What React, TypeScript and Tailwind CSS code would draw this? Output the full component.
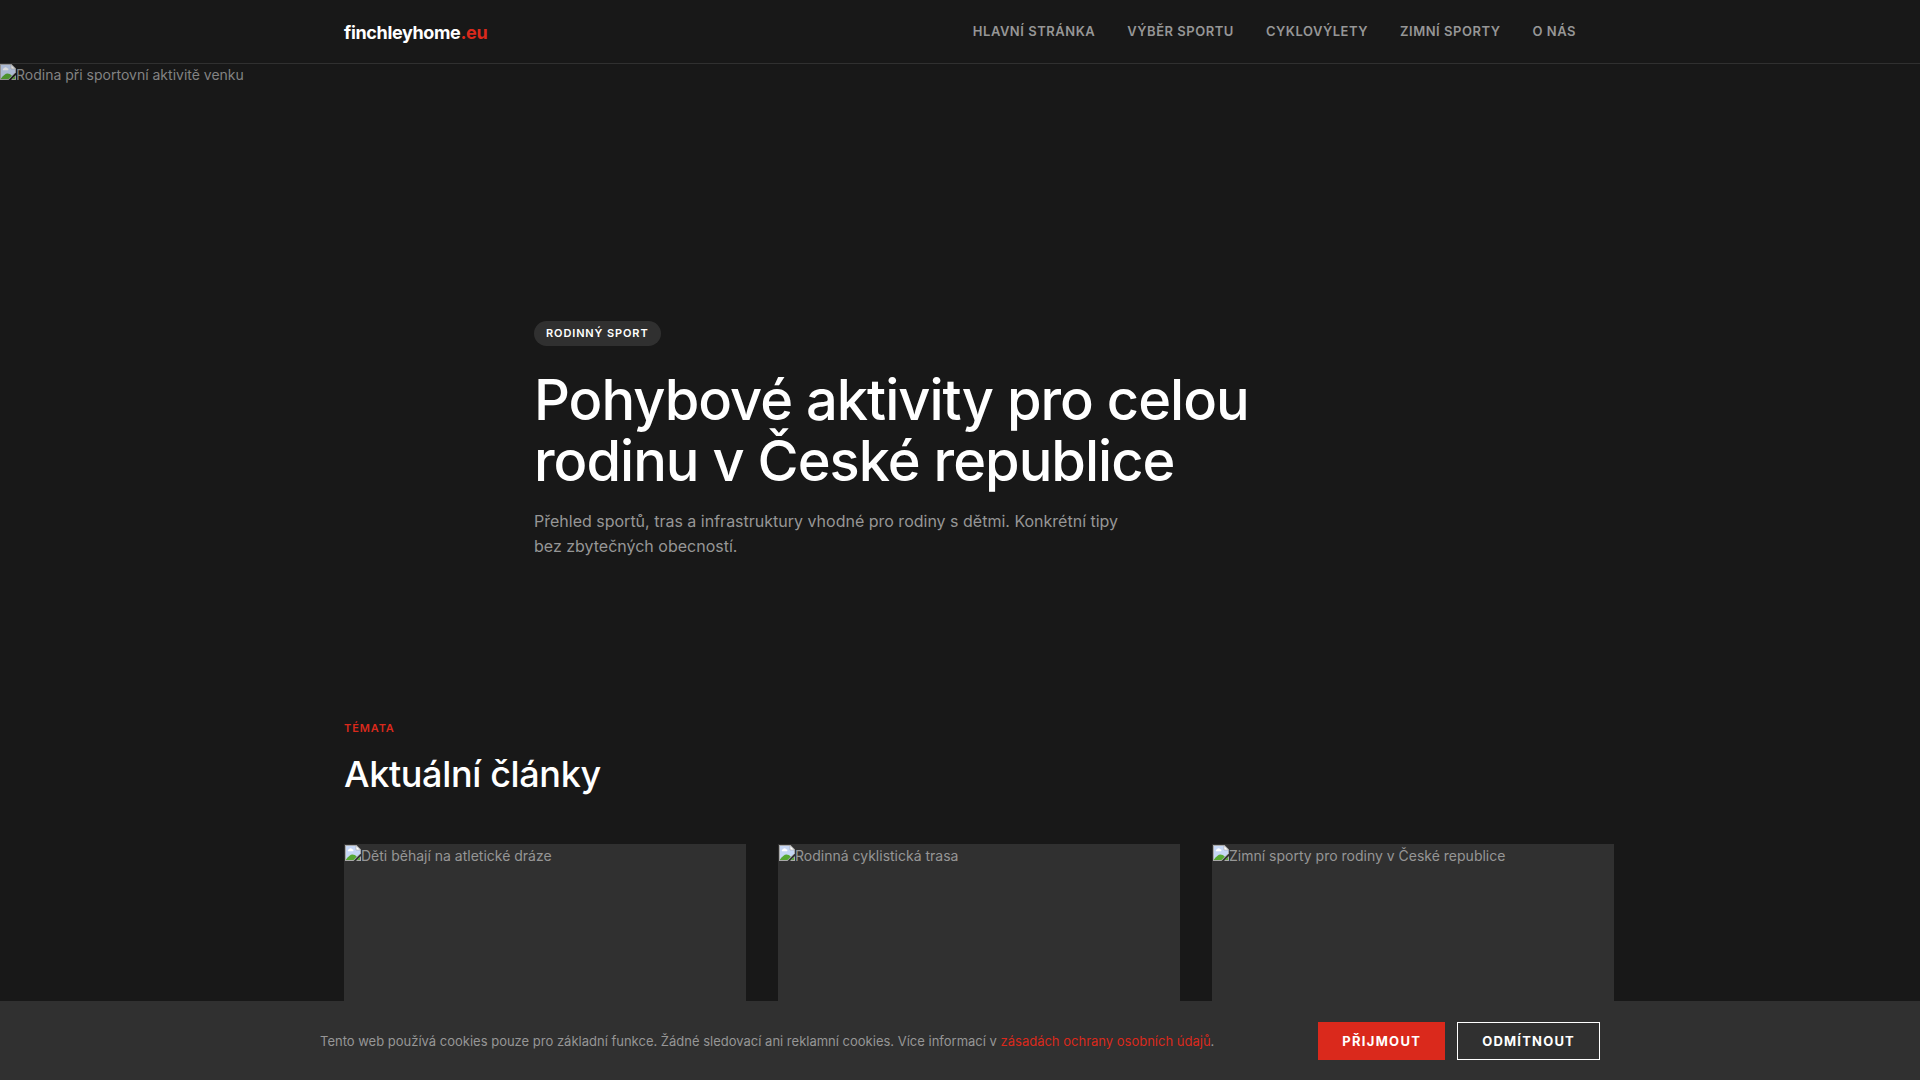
import React from "react";

const navItems = ["Hlavní stránka", "Výběr sportu", "Cyklovýlety", "Zimní sporty", "O nás"];

const articles = [
  "Děti běhají na atletické dráze",
  "Rodinná cyklistická trasa",
  "Zimní sporty pro rodiny v České republice",
];

function MissingImageIcon() {
  return (
    <svg width="16" height="16" viewBox="0 0 16 16" className="block shrink-0" aria-hidden="true">
      <path d="M0 0H11.5L16 4.5V8.5L8.5 16H0Z" fill="#a9a9a9" />
      <path d="M1 1H11L15 5V8.500L8.500 15H1Z" fill="#c6d7f5" />
      <path d="M3 6.2a1.3 1.3 0 0 1 1-2 1.8 1.800 0 0 1 3.200 0A1.100 1.100 0 0 1 8 6.200Z" fill="#fff" />
      <path d="M1 14.500C3 11.500 5.500 9.500 7.500 9.500C9 9.500 10.500 10.300 11.800 11.700L8.500 15H1Z" fill="#56a832" />
      <path d="M11 0.500V5H15.500Z" fill="#fff" stroke="#a9a9a9" strokeWidth="0.6" />
      <path d="M16 11V16H11Z" fill="#a9a9a9" />
      <path d="M15 12V15H12Z" fill="#56a832" />
    </svg>
  );
}

function MissingImage({ alt }: { alt: string }) {
  return (
    <div role="img" aria-label={alt} className="flex items-start text-sm leading-[22px]">
      <MissingImageIcon />
      <span>{alt}</span>
    </div>
  );
}

export default function App() {
  return (
    <div className="min-h-screen bg-[#181818] font-['Inter',sans-serif] text-[#969696]">
      <header className="border-b border-[#303030]">
        <div className="mx-auto flex h-[63px] max-w-[1280px] items-center justify-between px-6">
          <a href="#" className="pt-0.5 text-lg font-bold tracking-[-0.36px] text-white">
            finchleyhome<span className="text-[#da291c]">.eu</span>
          </a>
          <nav className="flex gap-8">
            {navItems.map((item) => (
              <a key={item} href="#" className="text-[13px] font-semibold uppercase tracking-[0.52px]">
                {item}
              </a>
            ))}
          </nav>
        </div>
      </header>

      <main>
        <section className="relative flex min-h-[591px] items-end">
          <div className="absolute inset-x-0 top-0 opacity-85">
            <MissingImage alt="Rodina při sportovní aktivitě venku" />
          </div>
          <div className="mx-auto w-full max-w-[900px] px-6 pb-24">
            <p className="w-fit rounded-full bg-[#303030] px-3 py-1 text-[11px] font-semibold uppercase leading-[17px] tracking-[0.88px] text-white">
              Rodinný sport
            </p>
            <h1 className="mt-6 text-[56px] font-medium leading-[61px] tracking-[-1px] text-white">
              Pohybové aktivity pro celou rodinu v České republice
            </h1>
            <p className="mt-[17px] max-w-[600px] text-base leading-[25px]">
              Přehled sportů, tras a infrastruktury vhodné pro rodiny s dětmi. Konkrétní tipy bez zbytečných obecností.
            </p>
          </div>
        </section>

        <section className="mx-auto max-w-[1280px] px-6 py-16">
          <p className="text-[11px] font-semibold uppercase leading-[19px] tracking-[0.88px] text-[#da291c]">Témata</p>
          <h2 className="mt-3 text-4xl font-medium leading-[48px] tracking-[-0.36px] text-white">Aktuální články</h2>
          <div className="mt-[46px] grid gap-8 lg:grid-cols-[repeat(3,minmax(402px,1fr))]">
            {articles.map((alt) => (
              <article key={alt} className="aspect-[4/3] bg-[#303030] p-px">
                <MissingImage alt={alt} />
              </article>
            ))}
          </div>
        </section>
      </main>

      <aside className="fixed inset-x-0 bottom-0 border-t border-[#303030] bg-[#303030] px-6 py-5">
        <div className="mx-auto flex max-w-[1280px] items-center justify-between gap-6">
          <p className="pb-px text-[13px] leading-5">
            Tento web používá cookies pouze pro základní funkce. Žádné sledovací ani reklamní cookies. Více informací v{" "}
            <a href="#" className="text-[#da291c]">
              zásadách ochrany osobních údajů
            </a>
            .
          </p>
          <div className="flex shrink-0 gap-3">
            <button type="button" className="bg-[#da291c] px-6 py-2 text-[13px] font-bold uppercase leading-5 tracking-[1.3px] text-white">
              Přijmout
            </button>
            <button type="button" className="border border-white px-6 py-2 text-[13px] font-bold uppercase leading-5 tracking-[1.2px] text-white">
              Odmítnout
            </button>
          </div>
        </div>
      </aside>
    </div>
  );
}
